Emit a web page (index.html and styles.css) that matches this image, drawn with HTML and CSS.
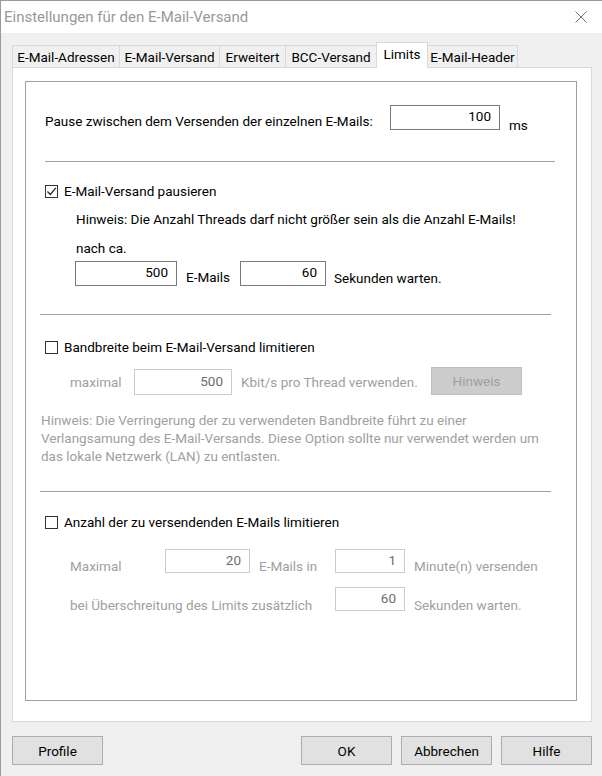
FILE: index.html
```html
<!DOCTYPE html>
<html lang="de">
<head>
    <meta charset="UTF-8">
    <title>Einstellungen für den E-Mail-Versand</title>
    <link rel="stylesheet" href="styles.css">
</head>
<body>
    <div class="window">
        <!-- Title bar -->
        <div class="titlebar">
            <span class="title">Einstellungen für den E-Mail-Versand</span>
            <svg class="close" width="12" height="12" viewBox="0 0 12 12">
                <path d="M0.5 0.5 L11.5 11.5 M11.5 0.5 L0.5 11.5" stroke="#707070" stroke-width="1" fill="none"/>
            </svg>
        </div>

        <!-- Tabs -->
        <div class="tabs">
            <div class="tab w1">E-Mail-Adressen</div>
            <div class="tab w2">E-Mail-Versand</div>
            <div class="tab w3">Erweitert</div>
            <div class="tab w4">BCC-Versand</div>
            <div class="tab w5 active">Limits</div>
            <div class="tab w6">E-Mail-Header</div>
        </div>

        <div class="panel">
            <div class="group">
                <!-- Pause -->
                <div class="row row-pause">
                    <span class="label pause-label">Pause zwischen dem Versenden der einzelnen E-Mails:</span>
                    <input class="field pause-field" type="text" value="100" readonly>
                    <span class="label unit-ms">ms</span>
                </div>

                <div class="sep sep1"></div>

                <!-- Versand pausieren -->
                <div class="check check1">
                    <span class="box">
                        <svg width="11" height="11" viewBox="0 0 11 11">
                            <path d="M1.5 5.5 L4.3 8.5 L9.8 1.8" stroke="#222" stroke-width="1.2" fill="none"/>
                        </svg>
                    </span>
                    <span>E-Mail-Versand pausieren</span>
                </div>
                <div class="line hint1">Hinweis: Die Anzahl Threads darf nicht größer sein als die Anzahl E-Mails!</div>
                <div class="line nach">nach ca.</div>
                <div class="row row-nach">
                    <input class="field f-500" type="text" value="500" readonly>
                    <span class="label l-mails">E-Mails</span>
                    <input class="field f-60" type="text" value="60" readonly>
                    <span class="label l-sek">Sekunden warten.</span>
                </div>

                <div class="sep sep2"></div>

                <!-- Bandbreite -->
                <div class="check check2">
                    <span class="box"></span>
                    <span>Bandbreite beim E-Mail-Versand limitieren</span>
                </div>
                <div class="row row-max">
                    <span class="label off l-maximal">maximal</span>
                    <input class="field disabled f-kbit" type="text" value="500" readonly>
                    <span class="label off l-kbit">Kbit/s pro Thread verwenden.</span>
                    <button class="btn-off">Hinweis</button>
                </div>
                <div class="note off">
                    Hinweis: Die Verringerung der zu verwendeten Bandbreite führt zu einer<br>
                    Verlangsamung des E-Mail-Versands. Diese Option sollte nur verwendet werden um<br>
                    das lokale Netzwerk (LAN) zu entlasten.
                </div>

                <div class="sep sep3"></div>

                <!-- Anzahl limitieren -->
                <div class="check check3">
                    <span class="box"></span>
                    <span>Anzahl der zu versendenden E-Mails limitieren</span>
                </div>
                <div class="row row-anz">
                    <span class="label off l-Maximal">Maximal</span>
                    <input class="field disabled f-20" type="text" value="20" readonly>
                    <span class="label off l-in">E-Mails in</span>
                    <input class="field disabled f-small" type="text" value="1" readonly>
                    <span class="label off l-after">Minute(n) versenden</span>
                </div>
                <div class="row row-ueber">
                    <span class="label off l-ueber">bei Überschreitung des Limits zusätzlich</span>
                    <input class="field disabled f-small" type="text" value="60" readonly>
                    <span class="label off l-after">Sekunden warten.</span>
                </div>
            </div>
        </div>

        <!-- Dialog buttons -->
        <div class="buttons">
            <button class="btn">Profile</button>
            <div class="spacer"></div>
            <button class="btn">OK</button>
            <button class="btn">Abbrechen</button>
            <button class="btn">Hilfe</button>
        </div>
    </div>
</body>
</html>
```

FILE: styles.css
```css
/* Global */
body {
    margin: 0;
    font-family: Roboto, "Noto Sans", sans-serif;
    font-size: 13.5px;
    line-height: 16px;
    color: #000;
    background: #f0f0f0;
}

.window {
    width: 602px;
    height: 776px;
    box-sizing: border-box;
    border-left: 1px solid #9a9a9a;
    border-top: 1px solid #9a9a9a;
    background: #f0f0f0;
    display: flex;
    flex-direction: column;
    overflow: hidden;
}

/* Title bar */
.titlebar {
    height: 32px;
    flex-shrink: 0;
    background: #fff;
    display: flex;
    align-items: center;
    justify-content: space-between;
    padding: 0 15px 0 3px;
}

.title {
    font-size: 15px;
    color: #999;
}

/* Tabs */
.tabs {
    display: flex;
    align-items: flex-end;
    height: 25px;
    margin: 9px 0 0 11px;
}

.tab {
    height: 22px;
    box-sizing: border-box;
    border: 1px solid #d9d9d9;
    border-bottom: none;
    margin-right: -1px;
    display: flex;
    align-items: center;
    justify-content: center;
    padding-top: 1px;
    background: #f0f0f0;
    white-space: nowrap;
}

.tab.active {
    height: 26px;
    margin-bottom: -1px;
    background: #fff;
    position: relative;
    z-index: 1;
    padding-top: 0;
    padding-bottom: 3px;
}

.w1 { width: 108px; }
.w2 { width: 101px; }
.w3 { width: 67px; }
.w4 { width: 92px; }
.w5 { width: 52px; }
.w6 { width: 91px; }

/* Tab page */
.panel {
    margin-left: 11px;
    width: 580px;
    height: 655px;
    flex-shrink: 0;
    box-sizing: border-box;
    border: 1px solid #d9d9d9;
    background: #fff;
    padding: 13px 0 0 12px;
}

.group {
    width: 552px;
    height: 620px;
    box-sizing: border-box;
    border: 1px solid #a0a0a0;
}

.row {
    display: flex;
    align-items: flex-start;
}

.label {
    white-space: nowrap;
}

.off {
    color: #a0a0a0;
}

.field {
    box-sizing: border-box;
    height: 25px;
    border: 1px solid #7a7a7a;
    background: #fff;
    text-align: right;
    padding: 0 8px 3px 0;
    margin: 0;
    font: inherit;
    color: #000;
    outline: none;
}

.field.disabled {
    border-color: #cccccc;
    color: #6d6d6d;
}

/* Row 1 */
.row-pause {
    height: 25px;
    margin: 23px 0 0 19px;
}

.pause-label {
    width: 345px;
    margin-top: 8px;
}

.pause-field {
    width: 110px;
}

.unit-ms {
    margin: 12px 0 0 9px;
}

/* Separators */
.sep {
    height: 1px;
    background: #a0a0a0;
}

.sep1 { margin: 31px 0 0 19px; width: 510px; }
.sep2 { margin: 28px 0 0 14px; width: 511px; }
.sep3 { margin: 26px 0 0 14px; width: 511px; }

/* Checkboxes */
.check {
    display: flex;
    align-items: center;
    height: 16px;
    margin-left: 19px;
}

.box {
    width: 13px;
    height: 13px;
    box-sizing: border-box;
    border: 1px solid #333;
    background: #fff;
    margin-right: 6px;
    display: flex;
    align-items: center;
    justify-content: center;
}

.check1 { margin-top: 21px; }
.check2 { margin-top: 24px; }
.check3 { margin-top: 22px; }

.line {
    margin-left: 50px;
}

.hint1 { margin-top: 12px; }
.nach { margin-top: 13px; }

/* nach ca. row */
.row-nach {
    height: 25px;
    margin: 5px 0 0 49px;
}

.f-500 { width: 102px; }

.l-mails {
    width: 54px;
    margin: 8px 0 0 9px;
}

.f-60 { width: 86px; }

.l-sek {
    margin: 9px 0 0 8px;
}

/* Bandbreite row */
.row-max {
    height: 28px;
    margin: 12px 0 0 44px;
}

.l-maximal {
    width: 64px;
    margin-top: 7px;
}

.f-kbit {
    width: 98px;
    height: 26px;
    margin-top: 2px;
}

.l-kbit {
    width: 190px;
    margin: 7px 0 0 9px;
}

.btn-off {
    width: 91px;
    height: 28px;
    border: 1px solid #bfbfbf;
    background: #cccccc;
    color: #a0a0a0;
    font: inherit;
    padding: 0;
}

.note {
    margin: 16px 0 0 15px;
    line-height: 18px;
}

/* Anzahl rows */
.row-anz {
    height: 24px;
    margin: 19px 0 0 44px;
}

.row-ueber {
    height: 24px;
    margin: 14px 0 0 44px;
}

.row-anz .field,
.row-ueber .field {
    height: 24px;
}

.row-anz .label {
    margin-top: 9px;
}

.row-ueber .label {
    margin-top: 10px;
}

.l-Maximal { width: 95px; }
.f-20 { width: 85px; }

.row-anz .l-in {
    width: 76px;
    margin-left: 9px;
}

.f-small { width: 70px; }

.row-anz .l-after,
.row-ueber .l-after {
    margin-left: 9px;
}

.l-ueber { width: 265px; }

/* Dialog buttons */
.buttons {
    display: flex;
    gap: 9px;
    width: 580px;
    margin: 14px 0 0 11px;
}

.spacer {
    flex: 1;
}

.btn {
    width: 91px;
    height: 29px;
    border: 1px solid #adadad;
    background: #e1e1e1;
    font: inherit;
    color: #000;
    padding: 0;
}
```
